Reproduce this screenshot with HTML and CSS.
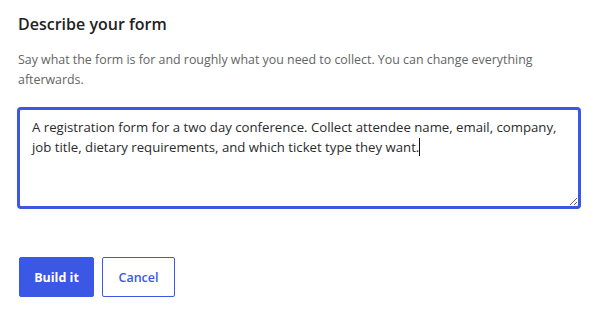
FILE: index.html
```html
<!DOCTYPE html>
<html lang="en">
<head>
<meta charset="utf-8">
<title>Describe your form</title>
<link rel="stylesheet" href="styles.css">
</head>
<body>
<main class="panel">
  <h1 class="title">Describe your form</h1>
  <p class="hint">Say what the form is for and roughly what you need to collect. You can change everything afterwards.</p>
  <div class="field" role="textbox" aria-multiline="true">A registration form for a two day conference. Collect attendee name, email, company, job title, dietary requirements, and which ticket type they want.<span class="caret"></span></div>
  <div class="actions">
    <button class="btn btn-primary" type="button">Build it</button>
    <button class="btn btn-secondary" type="button">Cancel</button>
  </div>
</main>
</body>
</html>
```

FILE: styles.css
```css
html, body {
  margin: 0;
  padding: 0;
  background: #ffffff;
}
body {
  font-family: "Open Sans", "Noto Sans", "Liberation Sans", sans-serif;
  color: #222222;
}
.panel {
  padding: 12px 15px 0 17px;
  display: flex;
  flex-direction: column;
}
.title {
  margin: 0 0 0 1px;
  font-size: 16px;
  font-weight: 600;
  line-height: 24px;
  color: #222222;
}
.hint {
  margin: 14px 0 0 1px;
  font-size: 12.4px;
  line-height: 20px;
  color: #646464;
}
.field {
  margin-top: 17px;
  box-sizing: border-box;
  height: 102px;
  border: 3px solid #3a58e3;
  border-radius: 4px;
  padding: 7px 12px 6px;
  font-size: 13.2px;
  line-height: 20px;
  color: #2b2b2b;
  overflow: auto;
  resize: vertical;
}
.caret {
  display: inline-block;
  width: 1px;
  height: 18px;
  background: #111111;
  vertical-align: -4px;
}
.actions {
  margin-top: 48px;
  margin-left: 2px;
  display: flex;
  gap: 8px;
}
.btn {
  box-sizing: border-box;
  height: 40px;
  padding: 0;
  border-radius: 2px;
  font-family: inherit;
  font-size: 12.5px;
  font-weight: 700;
  white-space: nowrap;
  cursor: pointer;
}
.btn-primary {
  width: 75px;
  background: #3a58e3;
  border: 1px solid #3a58e3;
  color: #ffffff;
}
.btn-secondary {
  width: 73px;
  background: #ffffff;
  border: 1px solid #3a58e3;
  color: #3a58e3;
  font-weight: 600;
}
```
